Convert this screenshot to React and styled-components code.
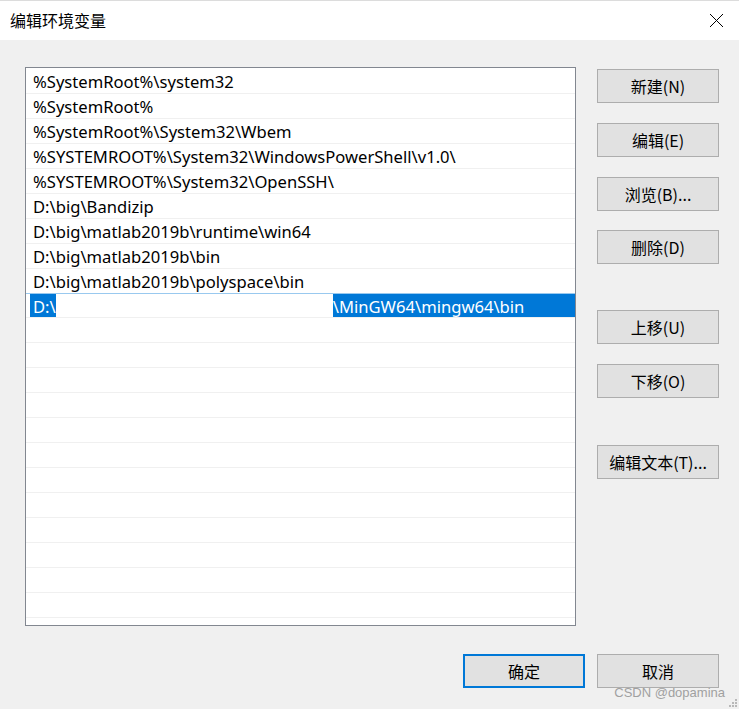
import React from "react";
import styled, { createGlobalStyle } from "styled-components";

const Global = createGlobalStyle`
  html, body { margin: 0; padding: 0; background: #f0f0f0; }
  body { font-family: "Noto Sans", "Noto Sans CJK SC", sans-serif; }
`;

const Window = styled.div`
  width: 739px;
  height: 709px;
  background: #f0f0f0;
  overflow: hidden;
  position: relative;
  box-sizing: border-box;
`;

const TitleBar = styled.div`
  height: 40px;
  background: #ffffff;
  border-top: 1px solid #dcdcdc;
  box-sizing: border-box;
  display: flex;
  align-items: center;
  justify-content: space-between;
  padding: 0 15px 0 10px;
`;

const Title = styled.div`
  font-family: "Noto Sans CJK SC", sans-serif;
  font-size: 16px;
  color: #000;
  margin-top: -2px;
`;

const Body = styled.div`
  padding: 27px 20px 0 25px;
`;

const Content = styled.div`
  display: flex;
  gap: 21px;
`;

const ListBox = styled.div`
  width: 552px;
  height: 559px;
  box-sizing: border-box;
  border: 1px solid #828790;
  padding-top: 1px;
  background: #ffffff;
  overflow: hidden;
`;

const Row = styled.div`
  height: 25px;
  box-sizing: border-box;
  border-bottom: 1px solid #f0f0f0;
  display: flex;
  align-items: center;
  padding: 1px 0 0 7px;
  font-size: 16.6px;
  color: #000;
  white-space: nowrap;
`;

const SelectedRow = styled.div`
  height: 25px;
  box-sizing: border-box;
  border-top: 1px solid #99c9ef;
  border-bottom: 1px solid #f0f0f0;
  margin-top: -1px;
  padding: 0 0 0 4px;
  display: flex;
`;

const Highlight = styled.div`
  flex: 1;
  display: flex;
  align-items: center;
  background: #0078d7;
  color: #ffffff;
  font-size: 16.6px;
  white-space: nowrap;
  padding: 1px 0 0 3px;
`;

const Masked = styled.span`
  display: inline-block;
  align-self: stretch;
  margin-top: -1px;
  width: ${(p) => p.$w}px;
  background: #ffffff;
`;

const ButtonColumn = styled.div`
  display: flex;
  flex-direction: column;
  padding-top: 2px;
`;

const Button = styled.button`
  width: 122px;
  height: 34px;
  box-sizing: border-box;
  background: #e1e1e1;
  border: ${(p) => (p.$primary ? "2px solid #0078d7" : "1px solid #adadad")};
  font-family: "Noto Sans CJK SC", sans-serif;
  font-size: 16px;
  color: #000;
  padding: 0;
  margin-top: ${(p) => p.$gap || 0}px;
  display: flex;
  align-items: center;
  justify-content: center;
`;

const Footer = styled.div`
  display: flex;
  justify-content: flex-end;
  gap: 12px;
  margin-top: 28px;
`;

const Watermark = styled.div`
  position: absolute;
  right: 14px;
  bottom: 9px;
  font-family: "Liberation Sans", sans-serif;
  font-size: 13px;
  color: #a0a0a0;
`;

const Grip = styled.svg`
  position: absolute;
  right: 2px;
  bottom: 2px;
`;

const paths = [
  "%SystemRoot%\\system32",
  "%SystemRoot%",
  "%SystemRoot%\\System32\\Wbem",
  "%SYSTEMROOT%\\System32\\WindowsPowerShell\\v1.0\\",
  "%SYSTEMROOT%\\System32\\OpenSSH\\",
  "D:\\big\\Bandizip",
  "D:\\big\\matlab2019b\\runtime\\win64",
  "D:\\big\\matlab2019b\\bin",
  "D:\\big\\matlab2019b\\polyspace\\bin",
];

const sideButtons = [
  { label: "新建(N)", gap: 0 },
  { label: "编辑(E)", gap: 20 },
  { label: "浏览(B)...", gap: 20 },
  { label: "删除(D)", gap: 19 },
  { label: "上移(U)", gap: 46 },
  { label: "下移(O)", gap: 20 },
  { label: "编辑文本(T)...", gap: 47 },
];

export default function App() {
  const empties = Array.from({ length: 14 });
  return (
    <Window>
      <Global />
      <TitleBar>
        <Title>编辑环境变量</Title>
        <svg width="15" height="15" viewBox="0 0 15 15">
          <path d="M1 1 L14 14 M14 1 L1 14" stroke="#000" strokeWidth="1" fill="none" />
        </svg>
      </TitleBar>
      <Body>
        <Content>
          <ListBox>
            {paths.map((p) => (
              <Row key={p}>{p}</Row>
            ))}
            <SelectedRow>
              <Highlight>
                D:\
                <Masked $w={277} />
                \MinGW64\mingw64\bin
              </Highlight>
            </SelectedRow>
            {empties.map((_, i) => (
              <Row key={i} />
            ))}
          </ListBox>
          <ButtonColumn>
            {sideButtons.map((b) => (
              <Button key={b.label} $gap={b.gap}>
                {b.label}
              </Button>
            ))}
          </ButtonColumn>
        </Content>
        <Footer>
          <Button $primary>确定</Button>
          <Button>取消</Button>
        </Footer>
      </Body>
      <Watermark>CSDN @dopamina</Watermark>
      <Grip width="10" height="10" viewBox="0 0 10 10">
        <g fill="#b8b8b8">
          <rect x="8" y="2" width="2" height="2" />
          <rect x="5" y="5" width="2" height="2" />
          <rect x="8" y="5" width="2" height="2" />
          <rect x="2" y="8" width="2" height="2" />
          <rect x="5" y="8" width="2" height="2" />
          <rect x="8" y="8" width="2" height="2" />
        </g>
      </Grip>
    </Window>
  );
}
